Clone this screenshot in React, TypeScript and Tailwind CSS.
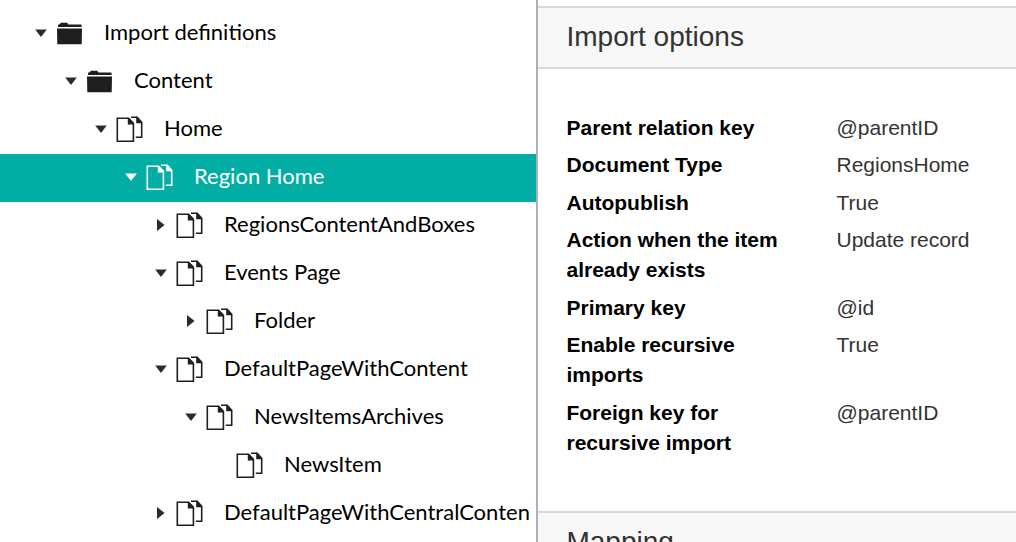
type NodeKind = "folder" | "document";

interface TreeNode {
  label: string;
  kind: NodeKind;
  open?: boolean;
  selected?: boolean;
  leaf?: boolean;
  children?: TreeNode[];
}

const tree: TreeNode[] = [
  {
    label: "Import definitions",
    kind: "folder",
    open: true,
    children: [
      {
        label: "Content",
        kind: "folder",
        open: true,
        children: [
          {
            label: "Home",
            kind: "document",
            open: true,
            children: [
              {
                label: "Region Home",
                kind: "document",
                open: true,
                selected: true,
                children: [
                  { label: "RegionsContentAndBoxes", kind: "document" },
                  {
                    label: "Events Page",
                    kind: "document",
                    open: true,
                    children: [{ label: "Folder", kind: "document" }],
                  },
                  {
                    label: "DefaultPageWithContent",
                    kind: "document",
                    open: true,
                    children: [
                      {
                        label: "NewsItemsArchives",
                        kind: "document",
                        open: true,
                        children: [{ label: "NewsItem", kind: "document", leaf: true }],
                      },
                    ],
                  },
                  { label: "DefaultPageWithCentralConten", kind: "document" },
                ],
              },
            ],
          },
        ],
      },
    ],
  },
];

const options = [
  { name: "Parent relation key", value: "@parentID" },
  { name: "Document Type", value: "RegionsHome" },
  { name: "Autopublish", value: "True" },
  { name: "Action when the item already exists", value: "Update record" },
  { name: "Primary key", value: "@id" },
  { name: "Enable recursive imports", value: "True" },
  { name: "Foreign key for recursive import", value: "@parentID" },
];

function Caret({ open }: { open?: boolean }) {
  return (
    <svg viewBox="0 0 18 18" className="size-[18px]" fill="currentColor" aria-hidden="true">
      {open ? <path d="M3.2 5.4h11.6L9 12.900z" /> : <path d="M5 3v12L12.600 9z" />}
    </svg>
  );
}

function FolderIcon() {
  return (
    <svg viewBox="0 0 28 28" className="size-7 shrink-0" aria-hidden="true">
      <path
        fill="#1f1d1e"
        d="M2 8V6.300Q2 5.700 2.600 5.600L3.600 5.300 4.400 4.200Q4.700 3.800 5.200 3.800H10.800Q11.400 3.800 11.700 4.300L12.400 5.500H25Q25.600 5.500 25.600 6.100V8zM1 9.400H26L25.700 25.200H1.300z"
      />
    </svg>
  );
}

function DocumentIcon() {
  return (
    <svg viewBox="0 0 28 28" className="size-7 shrink-0" aria-hidden="true">
      <g fill="none" stroke="currentColor" strokeWidth="1.6">
        <path d="M1.300 3.300H12.700L17.400 8.300V26.200H1.300z" />
        <path d="M15 2.300H21.200L25.700 7.300V22.200H19.800" />
      </g>
      <path fill="currentColor" d="M11.800 2.500L18.200 9.500H11.800zM20.200 1.500L26.500 8.200H20.200z" />
    </svg>
  );
}

const indents = ["pl-8", "pl-[62px]", "pl-[92px]", "pl-[122px]", "pl-[152px]", "pl-[182px]", "pl-[212px]"];

function TreeItem({ node, level }: { node: TreeNode; level: number }) {
  return (
    <li role="treeitem" aria-selected={!!node.selected} aria-expanded={node.leaf ? undefined : !!node.open}>
      <div
        className={`flex h-12 items-center pb-0.5 ${indents[level]} ${
          node.selected ? "bg-[#02aea3] text-white" : "text-[#2b2b2d]"
        }`}
      >
        {node.leaf ? (
          <span className="w-[18px] shrink-0" />
        ) : (
          <button type="button" aria-label={`Toggle ${node.label}`} className="shrink-0">
            <Caret open={node.open} />
          </button>
        )}
        <a
          href="#"
          className={`ml-1.5 flex items-center gap-5 whitespace-nowrap ${
            node.selected ? "text-white" : "text-black"
          }`}
        >
          <span className={node.selected ? "text-white" : "text-[#231f20]"}>
            {node.kind === "folder" ? <FolderIcon /> : <DocumentIcon />}
          </span>
          <span className="pb-0.5 text-[22px] leading-7">{node.label}</span>
        </a>
      </div>
      {node.children && (
        <ul role="group">
          {node.children.map((child) => (
            <TreeItem key={child.label} node={child} level={level + 1} />
          ))}
        </ul>
      )}
    </li>
  );
}

function SectionHeader({ title }: { title: string }) {
  return (
    <h2 className="border-y-2 border-[#d8d7d9] bg-[#f8f8f8] px-7 pt-[11px] pb-3 text-[28px] leading-9 text-[#333]">
      {title}
    </h2>
  );
}

export default function App() {
  return (
    <div className="flex h-screen overflow-hidden bg-white">
      <nav
        aria-label="Import definitions"
        className="w-[53%] shrink-0 overflow-hidden border-r-2 border-[#b1adba] pt-2.5 font-['Lato',sans-serif]"
      >
        <ul role="tree">
          {tree.map((node) => (
            <TreeItem key={node.label} node={node} level={0} />
          ))}
        </ul>
      </nav>
      <main className="min-w-0 flex-1 overflow-hidden pt-1.5 font-['Liberation_Sans',Arial,sans-serif]">
        <SectionHeader title="Import options" />
        <dl className="px-7 pt-11 pb-[46px] text-[21px] leading-[30px]">
          {options.map((option) => (
            <div key={option.name} className="flex odd:pb-[7px] even:pb-2">
              <dt className="w-[270px] shrink-0 pr-10 font-bold text-black">{option.name}</dt>
              <dd className="whitespace-nowrap text-[#333]">{option.value}</dd>
            </div>
          ))}
        </dl>
        <SectionHeader title="Mapping" />
      </main>
    </div>
  );
}
